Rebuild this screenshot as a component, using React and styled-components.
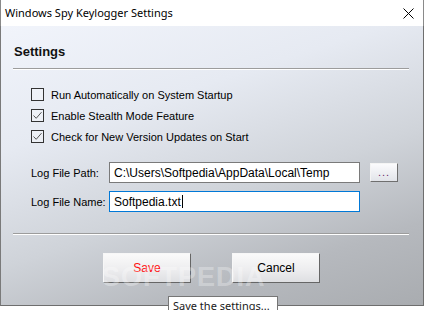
import React from 'react';
import styled, { createGlobalStyle } from 'styled-components';

const GlobalStyle = createGlobalStyle`
  html, body {
    margin: 0;
    padding: 0;
    background: #ffffff;
  }
  #root {
    width: 424px;
    height: 310px;
  }
`;

const Window = styled.div`
  position: relative;
  width: 424px;
  height: 310px;
  display: flex;
  flex-direction: column;
  overflow: hidden;
  font-family: "Liberation Sans", Arial, sans-serif;
  color: #000;
`;

const TitleBar = styled.div`
  height: 26px;
  flex: none;
  display: flex;
  align-items: center;
  justify-content: space-between;
  background: #ffffff;
  border-left: 1px solid #8a8a8a;
  border-right: 1px solid #8a8a8a;
  padding: 0 9px 0 4px;
`;

const Title = styled.span`
  font-family: "Noto Sans", "Open Sans", sans-serif;
  font-size: 11px;
  line-height: 16px;
  color: #000;
`;

const Body = styled.div`
  flex: 1;
  display: flex;
  flex-direction: column;
  padding: 18px 14px 0 12px;
  border-left: 1px solid #7a7a7a;
  border-right: 1px solid #6e6e6e;
  border-bottom: 1px solid #6e6e6e;
  background: linear-gradient(162deg, #f1f4fb 0%, #e6eaf2 30%, #cfd3d9 58%, #b6b9be 80%, #a9acb0 100%);
`;

const BottomStrip = styled.div`
  height: 4px;
  flex: none;
  background: #ffffff;
`;

const Heading = styled.div`
  font-size: 13px;
  font-weight: bold;
  line-height: 15px;
  margin-left: 1px;
  color: #111;
`;

const Rule = styled.div`
  height: 1px;
  flex: none;
  background: #9c9c9c;
  border-bottom: 1px solid #ffffff;
  margin-top: ${(p) => p.$top}px;
`;

const CheckList = styled.div`
  display: flex;
  flex-direction: column;
  margin: 14px 0 0 18px;
`;

const CheckRow = styled.label`
  height: 21px;
  display: flex;
  align-items: center;
  gap: 7px;
  font-size: 11px;
`;

const Box = styled.span`
  width: 11px;
  height: 11px;
  border: 1px solid #333;
  background: rgba(255, 255, 255, 0.25);
  display: flex;
  align-items: center;
  justify-content: center;
`;

const FieldGrid = styled.div`
  display: grid;
  grid-template-columns: 68px 251px 28px;
  column-gap: 10px;
  row-gap: 8px;
  align-items: center;
  margin: 15px 0 0 18px;
`;

const Label = styled.span`
  font-size: 11px;
  white-space: nowrap;
`;

const Input = styled.div`
  height: 19px;
  display: flex;
  align-items: center;
  padding: 0 4px;
  background: #fff;
  border: 1px solid ${(p) => (p.$focused ? '#0078d7' : '#7a7a7a')};
  font-size: 12px;
  white-space: nowrap;
`;

const Caret = styled.span`
  width: 1px;
  height: 13px;
  background: #000;
  margin-left: 1px;
`;

const BrowseButton = styled.div`
  box-sizing: border-box;
  height: 19px;
  display: flex;
  align-items: flex-end;
  justify-content: center;
  padding-bottom: 3px;
  font-size: 11px;
  line-height: 11px;
  letter-spacing: 1px;
  color: #6b2a6b;
  background: linear-gradient(#fbfbfd, #e2e4e9);
  border: 1px solid #f4f4f4;
  border-right-color: #6f6f6f;
  border-bottom-color: #6f6f6f;
`;

const ButtonRow = styled.div`
  display: flex;
  justify-content: center;
  gap: 41px;
  margin-top: 18px;
  padding-left: 1px;
`;

const Button = styled.div`
  width: 86px;
  height: 28px;
  display: flex;
  align-items: center;
  justify-content: center;
  font-size: 12px;
  color: ${(p) => (p.$accent ? '#ff1010' : '#000')};
  background: linear-gradient(#fafafa, #ececee 60%, #dedfe2);
  border: 1px solid #f7f7f7;
  border-right-color: #666;
  border-bottom-color: #666;
`;

const Watermark = styled.div`
  position: absolute;
  left: 102px;
  top: 262px;
  font-family: "Liberation Sans", Arial, sans-serif;
  font-weight: bold;
  font-size: 27px;
  letter-spacing: 1px;
  color: rgba(255, 255, 255, 0.3);
  pointer-events: none;
`;

const Tooltip = styled.div`
  position: absolute;
  left: 168px;
  top: 296px;
  width: 104px;
  height: 20px;
  padding-left: 4px;
  background: #fff;
  border: 1px solid #767676;
  font-family: "Noto Sans", "Open Sans", sans-serif;
  font-size: 11px;
  line-height: 17px;
  color: #1a1a1a;
  white-space: nowrap;
`;

const Check = () => (
  <svg width="11" height="11" viewBox="0 0 11 11">
    <path d="M1.5 5.5 L4.2 8.3 L9.5 2.2" fill="none" stroke="#555" strokeWidth="1" />
  </svg>
);

const CloseIcon = () => (
  <svg width="11" height="11" viewBox="0 0 11 11">
    <path d="M0.5 0.5 L10.5 10.5 M10.5 0.5 L0.5 10.5" stroke="#000" strokeWidth="1" />
  </svg>
);

const options = [
  { text: 'Run Automatically on System Startup', checked: false },
  { text: 'Enable Stealth Mode Feature', checked: true },
  { text: 'Check for New Version Updates on Start', checked: true },
];

export default function App() {
  return (
    <>
      <GlobalStyle />
      <Window>
        <TitleBar>
          <Title>Windows Spy Keylogger Settings</Title>
          <CloseIcon />
        </TitleBar>
        <Body>
          <Heading>Settings</Heading>
          <Rule $top={9} />
          <CheckList>
            {options.map((o) => (
              <CheckRow key={o.text}>
                <Box>{o.checked && <Check />}</Box>
                {o.text}
              </CheckRow>
            ))}
          </CheckList>
          <FieldGrid>
            <Label>Log File Path:</Label>
            <Input>C:\Users\Softpedia\AppData\Local\Temp</Input>
            <BrowseButton>...</BrowseButton>
            <Label>Log File Name:</Label>
            <Input $focused>
              Softpedia.txt
              <Caret />
            </Input>
          </FieldGrid>
          <Rule $top={21} />
          <ButtonRow>
            <Button $accent>Save</Button>
            <Button>Cancel</Button>
          </ButtonRow>
        </Body>
        <BottomStrip />
        <Watermark>SOFTPEDIA</Watermark>
        <Tooltip>Save the settings...</Tooltip>
      </Window>
    </>
  );
}
